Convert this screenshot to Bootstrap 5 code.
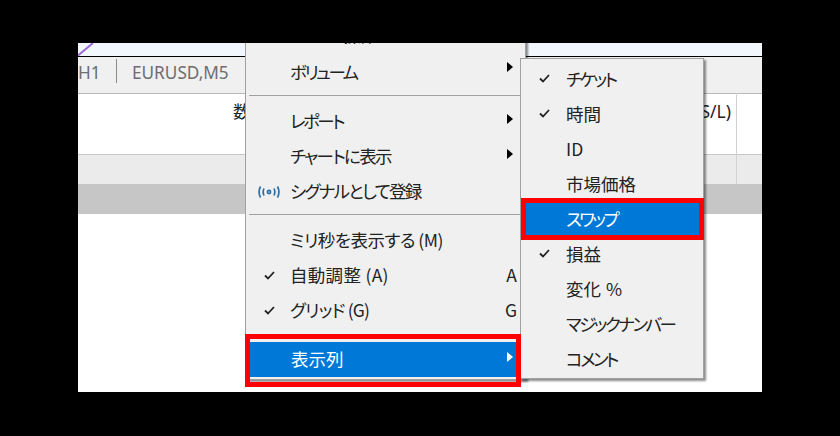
<!DOCTYPE html>
<html lang="ja"><head><meta charset="utf-8"><title>Menu</title>
<link href="https://cdn.jsdelivr.net/npm/bootstrap@5.3.0/dist/css/bootstrap.min.css" rel="stylesheet">
<style>
html,body{height:100%;margin:0;background:#000;overflow:hidden}
body{font-family:"Noto Sans","Noto Sans CJK JP",sans-serif;font-size:16px;color:#333}
.stage{height:436px;padding:43px 78px 44px}
.win{position:relative;height:349px;overflow:hidden;background:#fff}
.strip{height:13px;background:#f2f6fd;display:block}
.strip svg{display:block}
.blk{height:1px;background:#000}
.tabs{height:37px;background:#f0f0f0;border-bottom:1px solid #b9b9b9;color:#6d6d6d;font-size:17.2px}
.tab1{width:39px;border-right:1px solid #8a8a8a;height:24px;text-align:right;padding-right:18px;line-height:28px;margin-top:2px;overflow:hidden;white-space:nowrap}
.tab2{padding-left:15px;line-height:28px;margin-top:2px}
.hdr{height:61px;border-bottom:1px solid #c8c8c8}
.rowa{height:29px;background:#ebebeb}
.rowb{height:30px;background:#c6c6c6}
.ctext{position:absolute;top:55px;font-size:17.5px;color:#222}
.vl{position:absolute;top:50px;height:91px;width:1px;background:#d2d2d2;left:658px}
.mn{position:absolute;background:#f0f0f0;border:1px solid #a0a0a0;box-shadow:2px 2px 2px rgba(0,0,0,.45);font-family:"Noto Sans CJK JP",sans-serif;font-feature-settings:"palt";color:#222;font-size:17.5px}
.mn1{left:167px;top:-30px;width:281px;height:367px;padding-top:6px}
.mn2{left:442px;top:15px;width:184px;height:321px;padding-top:3px}
.it{height:35px;line-height:33px;position:relative;white-space:nowrap}
.it.cut{line-height:30px}
.mn1 .it{padding-left:44px}
.mn2 .it{padding-left:42px;margin:0 3px}
.sp{height:1px;background:#a0a0a0;margin:5px 2px 8px 3px}
.gap14{height:14px}
.hi{background:#0078d7;color:#fff}
.mn1 .hi{margin:0 7px 0 4px;padding-left:41px}
.ck{position:absolute;left:18px;top:13px;width:11px;height:9px}
.mn2 .ck{left:15px;top:12px}
.ar{position:absolute;right:12px;top:10px;width:0;height:0;border-left:6px solid #000;border-top:5.5px solid transparent;border-bottom:5.500px solid transparent}
.ar.up{top:7px}
.hi .ar{border-left-color:#fff;right:5px;top:10px}
.key{position:absolute;right:8px;top:0;letter-spacing:0}
.rd{position:absolute;border:5px solid #f00;pointer-events:none}
.rd1{left:167px;top:291px;width:276px;height:53px}
.rd2{left:443px;top:155px;width:183px;height:42px}
.sig{position:absolute;left:11px;top:11px;width:24px;height:14px}
.t1{letter-spacing:-2.500px}
.t2{letter-spacing:-1.700px}
.t3{letter-spacing:-.5px}
.t4{letter-spacing:.3px}
.t5{letter-spacing:-.8px}
.t6{word-spacing:1px}
</style></head><body>
<div class="stage"><div class="win">
<div class="strip"><svg width="684" height="13" viewBox="0 0 684 13"><path d="M0 12.500L15 0" stroke="#9a6ad6" stroke-width="2" fill="none"/></svg></div><div class="blk"></div>
<div class="tabs d-flex"><div class="tab1">H1</div><div class="tab2">EURUSD,M5</div></div>
<div class="hdr"></div><div class="rowa"></div><div class="rowb"></div>
<div class="ctext" style="left:155px">数</div><div class="ctext" style="left:590px;width:63px;text-align:right">S/L)</div>
<div class="vl"></div>
<div class="mn mn1">
 <div class="it cut t2">トレード操作</div>
 <div class="it t1">ボリューム<span class="ar up"></span></div>
 <div class="sp"></div>
 <div class="it t1">レポート<span class="ar"></span></div>
 <div class="it t2">チャートに表示<span class="ar"></span></div>
 <div class="it t2"><svg class="sig" viewBox="0 0 24 14" fill="none" stroke="#2b6ea6" stroke-width="1.700"><path d="M3.500 1.500Q.7 7 3.500 12.500M20.500 1.500Q23.300 7 20.500 12.500M7 3.500Q5.300 7 7 10.500M17 3.500Q18.700 7 17 10.500"/><circle cx="12" cy="7" r="1.600"/></svg>シグナルとして登録</div>
 <div class="sp"></div>
 <div class="it t3">ミリ秒を表示する (M)</div>
 <div class="it t4"><svg class="ck" viewBox="0 0 11 9" fill="none" stroke="#222" stroke-width="1.800"><path d="M1 4.500L4 7.500L10 1"/></svg>自動調整 (A)<span class="key">A</span></div>
 <div class="it t5"><svg class="ck" viewBox="0 0 11 9" fill="none" stroke="#222" stroke-width="1.800"><path d="M1 4.500L4 7.500L10 1"/></svg>グリッド (G)<span class="key">G</span></div>
 <div class="gap14"></div>
 <div class="it hi">表示列<span class="ar"></span></div>
</div>
<div class="mn mn2">
 <div class="it t1"><svg class="ck" viewBox="0 0 11 9" fill="none" stroke="#222" stroke-width="1.800"><path d="M1 4.500L4 7.500L10 1"/></svg>チケット</div>
 <div class="it"><svg class="ck" viewBox="0 0 11 9" fill="none" stroke="#222" stroke-width="1.800"><path d="M1 4.500L4 7.500L10 1"/></svg>時間</div>
 <div class="it">ID</div>
 <div class="it">市場価格</div>
 <div class="it hi t1">スワップ</div>
 <div class="it"><svg class="ck" viewBox="0 0 11 9" fill="none" stroke="#222" stroke-width="1.800"><path d="M1 4.500L4 7.500L10 1"/></svg>損益</div>
 <div class="it t6">変化 %</div>
 <div class="it t1">マジックナンバー</div>
 <div class="it t1">コメント</div>
</div>
<div class="rd rd1"></div><div class="rd rd2"></div>
</div></div>
</body></html>
